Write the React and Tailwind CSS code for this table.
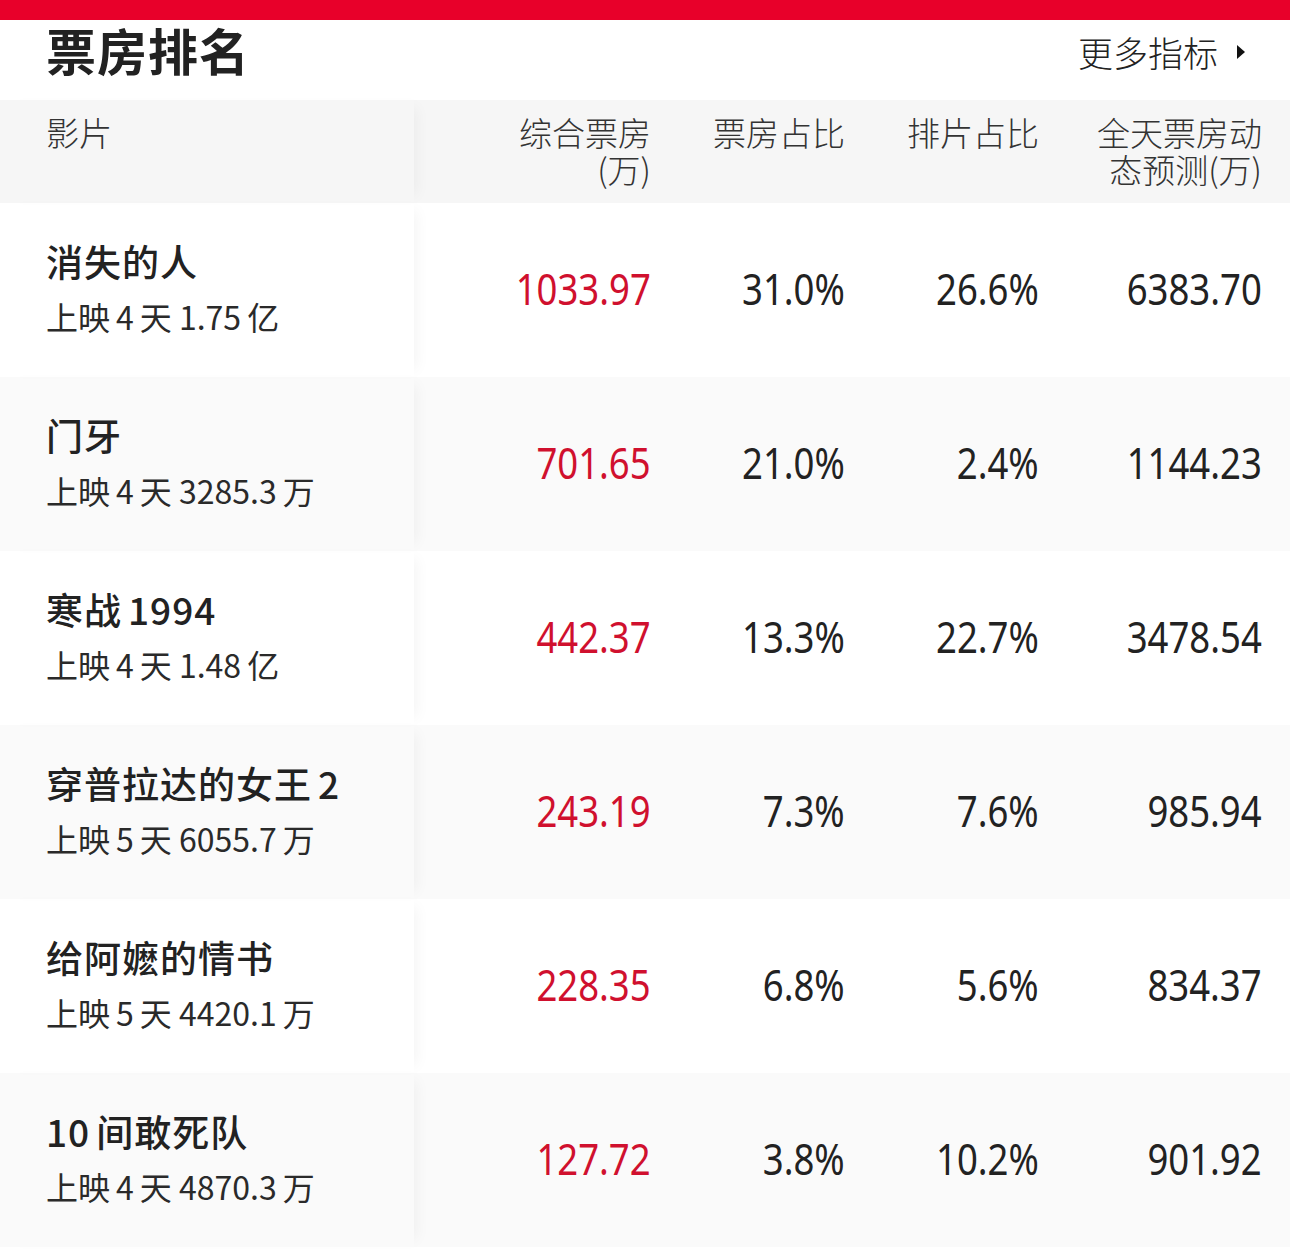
import React from 'react';

const films = [
    {name: '消失的人', sub: '上映4天 1.75亿', box: '1033.97', share: '31.0%', sched: '26.6%', est: '6383.70'},
    {name: '门牙', sub: '上映4天 3285.3万', box: '701.65', share: '21.0%', sched: '2.4%', est: '1144.23'},
    {name: '寒战1994', sub: '上映4天 1.48亿', box: '442.37', share: '13.3%', sched: '22.7%', est: '3478.54'},
    {name: '穿普拉达的女王2', sub: '上映5天 6055.7万', box: '243.19', share: '7.3%', sched: '7.6%', est: '985.94'},
    {name: '给阿嬷的情书', sub: '上映5天 4420.1万', box: '228.35', share: '6.8%', sched: '5.6%', est: '834.37'},
    {name: '10间敢死队', sub: '上映4天 4870.3万', box: '127.72', share: '3.8%', sched: '10.2%', est: '901.92'},
];

const cjk = "font-['Noto_Sans_CJK_SC','Noto_Sans',sans-serif]";

// little gap between digits and CJK like the app does
function Sub({text}) {
    const parts = text.split(/(\d+(?:\.\d+)?)/);
    return (
        <span>
            {parts.map((p, i) => {
                if (!/\d/.test(p)) return <span key={i}>{p}</span>;
                const l = i > 0 && parts[i - 1] !== '' && !parts[i - 1].endsWith(' ');
                const r = i < parts.length - 1 && parts[i + 1] !== '';
                return <span key={i} className={`${l ? 'ml-[6px]' : ''} ${r ? 'mr-[6px]' : ''}`}>{p}</span>;
            })}
        </span>
    );
}

function Num({children, red}) {
    return (
        <span className={`inline-block origin-right scale-x-[0.83] font-normal font-['Noto_Sans',sans-serif] ${red ? 'text-[#d0102e]' : 'text-[#222]'}`}>
            {children}
        </span>
    );
}

export default function App() {
    return (
        <div className={`w-[1290px] bg-white text-[#222] ${cjk}`}>
            <div className="h-[20px] bg-[#e8002a]"></div>

            <div className="h-[80px] flex items-center justify-between pl-[46px] pr-[44px]">
                <h1 className="text-[50px] font-bold leading-none tracking-[1px] -mt-[22px]">票房排名</h1>
                <div className="flex items-center gap-[18px] -mt-[16px]">
                    <span className="text-[35px] font-light">更多指标</span>
                    <svg width="10" height="16" viewBox="0 0 10 16"><path d="M1 1 L9 8 L1 15 Z" fill="#111"/></svg>
                </div>
            </div>

            <div className="h-[103px] flex bg-[#f6f6f6] text-[33px] font-light text-[#333] leading-[37px]">
                <div className="w-[414px] pl-[46px] pt-[14px] shadow-[10px_0_14px_-8px_rgba(0,0,0,0.05)] relative z-10">影片</div>
                <div className="w-[237px] text-right pt-[14px]">综合票房<br/>(万)</div>
                <div className="w-[194px] text-right pt-[14px]">票房占比</div>
                <div className="w-[194px] text-right pt-[14px]">排片占比</div>
                <div className="w-[223px] text-right pt-[14px] pl-[40px]">全天票房动态预测(万)</div>
            </div>

            {films.map((f, i) => (
                <div key={f.name} className={`h-[174px] flex items-center ${i % 2 ? 'bg-[#fafafa]' : 'bg-white'}`}>
                    <div className="w-[414px] h-full flex flex-col justify-center pl-[46px] shadow-[10px_0_14px_-8px_rgba(0,0,0,0.05)] relative z-10">
                        <div className="text-[37px] font-medium leading-[48px] tracking-[1px] -mt-[4px]"><Sub text={f.name}/></div>
                        <div className="text-[32px] leading-[46px] mt-[8px] text-[#2a2a2a]"><Sub text={f.sub}/></div>
                    </div>
                    <div className="w-[237px] text-right text-[44px] -mt-[6px]"><Num red>{f.box}</Num></div>
                    <div className="w-[194px] text-right text-[44px] -mt-[6px]"><Num>{f.share}</Num></div>
                    <div className="w-[194px] text-right text-[44px] -mt-[6px]"><Num>{f.sched}</Num></div>
                    <div className="w-[223px] text-right text-[44px] -mt-[6px]"><Num>{f.est}</Num></div>
                </div>
            ))}
            <div className="h-[10px]"></div>
        </div>
    );
}
